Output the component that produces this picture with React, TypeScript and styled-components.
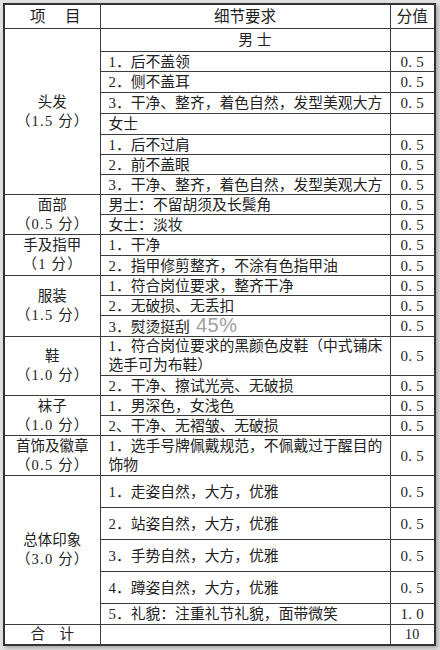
import React from "react";
import styled, { createGlobalStyle } from "styled-components";

const Global = createGlobalStyle`
  html, body {
    margin: 0;
    padding: 0;
    background: #e2e2e2;
  }
  * {
    text-spacing-trim: space-all;
  }
`;

const Page = styled.div`
  padding: 3px 0 0 3px;
  width: 440px;
  height: 650px;
  box-sizing: border-box;
`;

const Table = styled.table`
  width: 431px;
  table-layout: fixed;
  border-collapse: collapse;
  background: #ffffff;
  border: 2px solid #333;
  box-shadow: 2px 2px 4px rgba(0, 0, 0, 0.28);
  font-family: "Liberation Serif", "Noto Sans CJK SC", serif;
  font-size: 15px;
  color: #222;
`;

const Col = styled.col<{ $w: number }>`
  width: ${(p) => p.$w}px;
`;

const Cell = styled.td<{ $h?: number; $lh?: number }>`
  border: 1px solid #3c3c3c;
  padding: 0;
  height: ${(p) => (p.$h ? `${p.$h - 1}px` : "auto")};
  line-height: ${(p) => p.$lh ?? 18}px;
  vertical-align: middle;
  white-space: nowrap;
  overflow: hidden;
`;

const HeadCell = styled(Cell).attrs({ as: "th" })<{ $shift?: number }>`
  text-align: center;
  font-size: 15.5px;
  font-weight: 400;
  padding-left: ${(p) => p.$shift ?? 0}px;
`;

const TitleCell = styled(Cell)`
  text-align: center;
  font-size: 14.5px;
  line-height: 19px;
`;

const TitleLine = styled.div<{ $sub?: boolean }>`
  display: block;
  letter-spacing: ${(p) => (p.$sub ? "1.2px" : "0")};
  padding-left: ${(p) => (p.$sub ? "1px" : "0")};
`;

const TextCell = styled(Cell)<{ $center?: boolean }>`
  padding-left: ${(p) => (p.$center ? 20 : 8)}px;
  text-align: ${(p) => (p.$center ? "center" : "left")};
  font-size: 14.8px;
`;

const ScoreCell = styled(Cell)<{ $small?: boolean }>`
  text-align: center;
  font-size: ${(p) => (p.$small ? 14 : 15)}px;
  letter-spacing: 0.2px;
`;

const Watermark = styled.span`
  font-family: "Liberation Sans", sans-serif;
  font-size: 20px;
  color: #a0a0a0;
  margin-left: 6px;
  line-height: 18px;
  letter-spacing: 0.5px;
`;

type Item = {
  text: React.ReactNode;
  score?: string;
  h: number;
  center?: boolean;
  lh?: number;
};

type Group = { title: string[]; items: Item[] };

const groups: Group[] = [
  {
    title: ["头发", "（1.5 分）"],
    items: [
      { text: "男 士", h: 23, center: true },
      { text: "1．后不盖领", score: "0. 5", h: 20 },
      { text: "2．侧不盖耳", score: "0. 5", h: 21 },
      { text: "3．干净、整齐，着色自然，发型美观大方", score: "0. 5", h: 21 },
      { text: "女士", h: 21 },
      { text: "1．后不过肩", score: "0. 5", h: 20 },
      { text: "2．前不盖眼", score: "0. 5", h: 20 },
      { text: "3．干净、整齐，着色自然，发型美观大方", score: "0. 5", h: 20 },
    ],
  },
  {
    title: ["面部", "（0.5 分）"],
    items: [
      { text: "男士：不留胡须及长鬓角", score: "0. 5", h: 20 },
      { text: "女士：淡妆", score: "0. 5", h: 20 },
    ],
  },
  {
    title: ["手及指甲", "（1 分）"],
    items: [
      { text: "1．干净", score: "0. 5", h: 21 },
      { text: "2．指甲修剪整齐，不涂有色指甲油", score: "0. 5", h: 20 },
    ],
  },
  {
    title: ["服装", "（1.5 分）"],
    items: [
      { text: "1．符合岗位要求，整齐干净", score: "0. 5", h: 20 },
      { text: "2．无破损、无丢扣", score: "0. 5", h: 20 },
      {
        text: (
          <>
            3．熨烫挺刮<Watermark>45%</Watermark>
          </>
        ),
        score: "0. 5",
        h: 20,
      },
    ],
  },
  {
    title: ["鞋", "（1.0 分）"],
    items: [
      {
        text: (
          <>
            1．符合岗位要求的黑颜色皮鞋（中式铺床
            <br />
            选手可为布鞋）
          </>
        ),
        score: "0. 5",
        h: 39,
        lh: 19,
      },
      { text: "2．干净、擦试光亮、无破损", score: "0. 5", h: 20 },
    ],
  },
  {
    title: ["袜子", "（1.0 分）"],
    items: [
      { text: "1．男深色，女浅色", score: "0. 5", h: 20 },
      { text: "2、干净、无褶皱、无破损", score: "0. 5", h: 20 },
    ],
  },
  {
    title: ["首饰及徽章", "（0.5 分）"],
    items: [
      {
        text: (
          <>
            1．选手号牌佩戴规范，不佩戴过于醒目的
            <br />
            饰物
          </>
        ),
        score: "0. 5",
        h: 40,
        lh: 19,
      },
    ],
  },
  {
    title: ["总体印象", "（3.0 分）"],
    items: [
      { text: "1．走姿自然，大方，优雅", score: "0. 5", h: 32 },
      { text: "2．站姿自然，大方，优雅", score: "0. 5", h: 32 },
      { text: "3．手势自然，大方，优雅", score: "0. 5", h: 32 },
      { text: "4．蹲姿自然，大方，优雅", score: "0. 5", h: 32 },
      { text: "5．礼貌：注重礼节礼貌，面带微笑", score: "1. 0", h: 21 },
    ],
  },
];

export default function App() {
  return (
    <Page>
      <Global />
      <Table>
        <colgroup>
          <Col $w={96} />
          <Col $w={290} />
          <Col $w={45} />
        </colgroup>
        <tbody>
          <tr>
            <HeadCell $h={24} $shift={6}>
              项　 目
            </HeadCell>
            <HeadCell $h={24}>细节要求</HeadCell>
            <HeadCell $h={24}>分值</HeadCell>
          </tr>
          {groups.map((g) =>
            g.items.map((it, i) => (
              <tr key={g.title[0] + i}>
                {i === 0 && (
                  <TitleCell rowSpan={g.items.length}>
                    {g.title.map((t, k) => (
                      <TitleLine key={t} $sub={k > 0}>
                        {t}
                      </TitleLine>
                    ))}
                  </TitleCell>
                )}
                <TextCell $h={it.h} $lh={it.lh} $center={it.center}>
                  {it.text}
                </TextCell>
                <ScoreCell $h={it.h}>{it.score ?? ""}</ScoreCell>
              </tr>
            ))
          )}
          <tr>
            <TitleCell $h={20}>合　计</TitleCell>
            <TextCell $h={20} />
            <ScoreCell $h={20} $small>
              10
            </ScoreCell>
          </tr>
        </tbody>
      </Table>
    </Page>
  );
}
